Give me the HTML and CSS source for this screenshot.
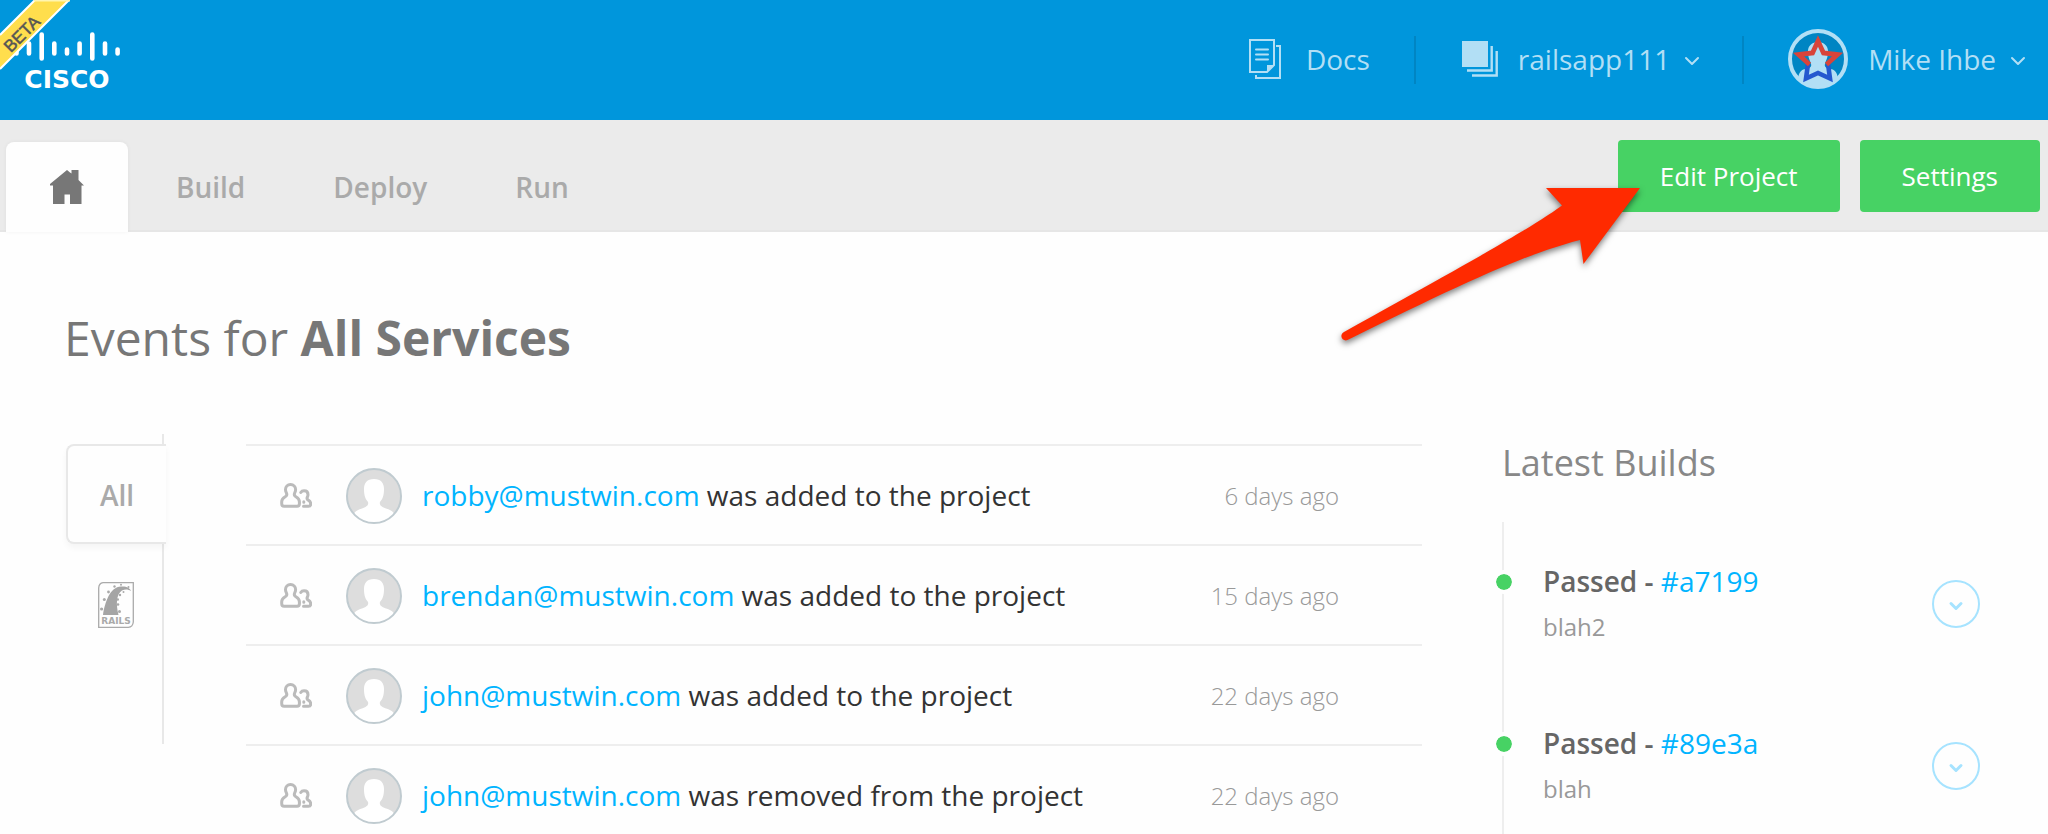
FILE: index.html
```html
<!DOCTYPE html>
<html lang="en">
<head>
<meta charset="utf-8">
<title>Events for All Services</title>
<link rel="stylesheet" href="styles.css">
</head>
<body>
<svg class="defs" aria-hidden="true">
  <symbol id="people" viewBox="0 0 32 25">
    <g fill="none" stroke="#bbb" stroke-width="3" stroke-linejoin="round" stroke-linecap="round">
      <path d="M10.500 1.500c-3 0-5 2.200-5 5 0 2.200.8 3 1.200 4.200.4 1.500-.2 2.300-1.500 3.100-2.400 1.300-3.500 2.400-3.500 5v2c0 1.600.9 2.500 2.400 2.500h13c1.500 0 2.300-.9 2.300-2.500v-2c0-2.600-1.100-3.700-3.500-5-1.300-.8-1.900-1.600-1.500-3.100.4-1.200 1.200-2 1.200-4.200 0-2.800-2-5-5.100-5z"/>
      <path d="M20.800 9.500c.8-1.300 1.900-1.700 3.200-1.700 2.400 0 4 1.600 4 3.900 0 1.200-.6 2.100-.9 3.100-.3 1.100.2 1.700 1.200 2.300 1.600.9 2.400 1.800 2.400 3.800 0 1.600-.7 2.400-2.200 2.400h-5M23.800 18.800v.4"/>
    </g>
  </symbol>
  <symbol id="person" viewBox="0 0 56 56">
    <clipPath id="disc"><circle cx="28" cy="28" r="27"/></clipPath>
    <circle cx="28" cy="28" r="27" fill="#ddd"/>
    <path clip-path="url(#disc)" fill="#fff" d="M28 11c-7 0-10 4-10 10 0 7 1.500 10 4 13 1 3-2 5-6 6.500-5 1.500-8 3.500-9 7.500v8h42v-8c-1-4-4-6-9-7.500-4-1.500-7-3.500-6-6.500 2.500-3 4-6 4-13 0-6-3-10-10-10z"/>
    <circle cx="28" cy="28" r="27" fill="none" stroke="#c0cbd0" stroke-width="2"/>
  </symbol>
</svg>

<header class="topbar">
  <a class="logo" href="#" aria-label="Cisco beta">
    <svg width="124" height="100" viewBox="0 0 124 100">
      <g stroke="#fff" stroke-width="4.600" stroke-linecap="round">
        <path d="M16.500 49.500v4M29 43.500v10M41.700 34.500v24M54.300 43.500v10M67 49.500v4M79.600 43.500v10M92.300 34.500v24M105 43.500v10M117.600 49.500v4"/>
      </g>
      <text class="logo-name" x="67" y="88" text-anchor="middle">CISCO</text>
      <path d="M35 0H69L0 69V35z" fill="#ffde4d"/>
      <path d="M35 0L0 35M69 0L0 69" stroke="#fff" stroke-width="2"/>
      <path d="M34 .7H70" stroke="#fff5b0" stroke-width="1.400"/>
      <text class="beta" text-anchor="middle" transform="translate(26 38) rotate(-45)">BETA</text>
    </svg>
  </a>
  <nav class="top-links">
    <a class="top-link docs" href="#">
      <svg width="32" height="40" viewBox="0 0 32 40" fill="none" stroke="#b2dff5" stroke-width="2">
        <path d="M1 1h24v25l-7 7H1zM27 7h4v32H7v-3"/>
        <path d="M7 10.500h12M7 15.500h12M7 20.500h12" stroke-linecap="round"/>
        <path d="M18 33v-7h7z" fill="#b2dff5" stroke="none"/>
      </svg>
      <span>Docs</span>
    </a>
    <button class="top-link project" type="button">
      <svg width="36" height="36" viewBox="0 0 36 36" fill="none" stroke="#b2dff5" stroke-width="2.400">
        <path d="M0 0h26v26H0z" fill="#b2dff5" stroke="none"/>
        <path d="M29.700 5v24.500H5M34.700 10v24.500H10"/>
      </svg>
      <span>railsapp111</span>
      <svg class="caret" width="16" height="10" viewBox="0 0 16 10"><path d="M2 2l6 6 6-6"/></svg>
    </button>
    <button class="top-link user" type="button">
      <svg width="60" height="60" viewBox="0 0 60 60">
        <circle cx="30" cy="30" r="28" fill="#0085c3"/>
        <path d="M30 13c-6 0-10 4-10 9 0 7 2 9 3 13 1 3-2 4.500-5 5-4 0-7 3-8 9a28 28 0 0 0 40 0c-1-6-4-9-8-9-3-.5-6-2-5-5 1-4 3-6 3-13 0-5-4-9-10-9z" fill="#b2dff5"/>
        <circle cx="30" cy="30" r="28" fill="none" stroke="#b2dff5" stroke-width="4"/>
        <path d="M20 35L18 49.500 30 44l12 5.500L40 35" fill="none" stroke="#2458cf" stroke-width="4.600"/>
        <path d="M21.500 35.500L10.500 25.500l14-1.500L30 12l5.500 12 14 1.500L38.500 35.500" fill="none" stroke="#d8443a" stroke-width="4.800"/>
      </svg>
      <span>Mike Ihbe</span>
      <svg class="caret" width="16" height="10" viewBox="0 0 16 10"><path d="M2 2l6 6 6-6"/></svg>
    </button>
  </nav>
</header>

<div class="subbar">
  <nav class="tabs">
    <a class="tab home" href="#" aria-label="Home">
      <svg width="34" height="34" viewBox="0 0 34 34"><path d="M17 0L20 2.500 21.500 3.500V0H28.500V10L34 15.500H31.500V34H20V24.500H14.500V34H3V15.500H0V14z" fill="#777"/></svg>
    </a>
    <a class="tab" href="#">Build</a>
    <a class="tab" href="#">Deploy</a>
    <a class="tab" href="#">Run</a>
  </nav>
  <div class="actions">
    <button class="action" type="button">Edit Project</button>
    <button class="action" type="button">Settings</button>
    <svg class="pointer" width="312" height="170" viewBox="0 0 312 170">
      <path d="M308 8H214L230 25.500C200 47 160 70 12 152a4.200 4.200 0 0 0 3.500 8C130 104 190 75 248 60L251.500 84z" fill="#ff2a00"/>
    </svg>
  </div>
</div>

<main class="page">
  <h1 class="title">Events for <strong>All Services</strong></h1>
  <div class="columns">
    <nav class="services">
      <a class="service selected" href="#">All</a>
      <a class="service" href="#" aria-label="Rails">
        <svg width="36" height="46" viewBox="0 0 36 46">
          <path d="M5 .7H35.300V40q-.5 5-5 5.300H.7V6Q1 1.200 5 .7z" fill="none" stroke="#aaa" stroke-width="1.300"/>
          <path d="M5 33C7 20 12 5 23 4.500c6-.3 9 1.500 10 4.500-3-2-6-2-9-.5-6 4-6 14-3.500 24.500z" fill="#a5a5a5"/>
          <g fill="#aaa"><circle cx="3.600" cy="27" r="1.600"/><circle cx="6.300" cy="17.500" r="1.500"/><circle cx="10.500" cy="10" r="1.400"/><circle cx="16.500" cy="4.500" r="1.200"/><circle cx="23" cy="2.700" r="1"/><circle cx="30.500" cy="5" r="1"/><circle cx="25.500" cy="10" r="1"/><circle cx="22" cy="13" r="1.200"/><circle cx="19.800" cy="17.500" r="1.200"/><circle cx="20" cy="22.500" r="1.300"/><circle cx="21.500" cy="29.500" r="1.500"/></g>
          <text class="rails-name" x="18" y="42" text-anchor="middle">RAILS</text>
        </svg>
      </a>
    </nav>

    <ul class="events">
      <li class="event">
        <svg class="kind" width="32" height="25"><use href="#people"/></svg>
        <svg class="avatar" width="56" height="56"><use href="#person"/></svg>
        <p class="what"><a href="#">robby@mustwin.com</a> was added to the project</p>
        <time class="when">6 days ago</time>
      </li>
      <li class="event">
        <svg class="kind" width="32" height="25"><use href="#people"/></svg>
        <svg class="avatar" width="56" height="56"><use href="#person"/></svg>
        <p class="what"><a href="#">brendan@mustwin.com</a> was added to the project</p>
        <time class="when">15 days ago</time>
      </li>
      <li class="event">
        <svg class="kind" width="32" height="25"><use href="#people"/></svg>
        <svg class="avatar" width="56" height="56"><use href="#person"/></svg>
        <p class="what"><a href="#">john@mustwin.com</a> was added to the project</p>
        <time class="when">22 days ago</time>
      </li>
      <li class="event">
        <svg class="kind" width="32" height="25"><use href="#people"/></svg>
        <svg class="avatar" width="56" height="56"><use href="#person"/></svg>
        <p class="what"><a href="#">john@mustwin.com</a> was removed from the project</p>
        <time class="when">22 days ago</time>
      </li>
    </ul>

    <section class="builds">
      <h2 class="builds-title">Latest Builds</h2>
      <ol class="timeline">
        <li class="build">
          <div class="build-text">
            <p class="build-name"><strong>Passed -</strong> <a href="#">#a7199</a></p>
            <p class="build-note">blah2</p>
          </div>
          <button class="expand" type="button" aria-label="Show build"><svg width="16" height="10" viewBox="0 0 16 10"><path d="M3 2.500l5 5 5-5"/></svg></button>
        </li>
        <li class="build">
          <div class="build-text">
            <p class="build-name"><strong>Passed -</strong> <a href="#">#89e3a</a></p>
            <p class="build-note">blah</p>
          </div>
          <button class="expand" type="button" aria-label="Show build"><svg width="16" height="10" viewBox="0 0 16 10"><path d="M3 2.500l5 5 5-5"/></svg></button>
        </li>
      </ol>
    </section>
  </div>
</main>
</body>
</html>
```
FILE: styles.css
```css
*, *::before { box-sizing: border-box; }
html { height: 100%; overflow: hidden; }
body {
  height: 100%;
  margin: 0;
  overflow: hidden;
  background: #fefefe;
  color: #333;
  font-family: "Open Sans", "Noto Sans", sans-serif;
  font-size: 28px;
  line-height: 40px;
}
a { color: #00b4ff; text-decoration: none; }
button { border: 0; background: none; font: inherit; cursor: pointer; }
h1, h2, p, ul, ol { margin: 0; padding: 0; font-weight: 400; }
ul, ol { list-style: none; }
svg { display: block; flex: none; }
.defs { position: absolute; width: 0; height: 0; }

.topbar {
  display: flex;
  justify-content: space-between;
  height: 120px;
  background: #0096dc;
}
.logo-name { font-family: "DejaVu Sans", sans-serif; font-size: 25px; font-weight: 700; fill: #fff; }
.beta { font-family: "Liberation Sans", sans-serif; font-size: 17px; fill: #555; stroke: #555; stroke-width: 0.5px; }
.top-links { display: flex; align-items: center; }
.top-link {
  display: flex;
  align-items: center;
  height: 48px;
  padding: 0 44px 2px;
  color: #b2dff5;
}
.top-link + .top-link { border-left: 2px solid #0085c3; }
.docs { gap: 25px; }
.project { gap: 20px; padding-left: 46px; padding-right: 42px; }
.user { gap: 20px; padding-right: 22px; }
.caret { margin: 4px 0 0 -6px; }
.caret path { fill: none; stroke: #b2dff5; stroke-width: 2; stroke-linecap: round; stroke-linejoin: round; }

.subbar {
  display: flex;
  justify-content: space-between;
  height: 112px;
  padding: 0 8px 0 6px;
  background: #ebebeb;
  border-bottom: 2px solid #e6e6e6;
}
.tabs { display: flex; align-items: flex-end; height: 112px; }
.tab {
  padding: 24px 40px 25px 48px;
  color: #aaa;
  font-weight: 600;
}
.home {
  display: flex;
  width: 122px;
  height: 90px;
  padding: 28px 44px;
  background: #fefefe;
  border-radius: 8px 8px 0 0;
  box-shadow: 0 0 4px rgba(0, 0, 0, 0.05);
}
.actions { position: relative; display: flex; gap: 20px; padding-top: 20px; }
.action {
  height: 72px;
  padding: 0 42px;
  border-radius: 4px;
  background: #47d264;
  color: #fff;
  font-size: 26px;
  font-weight: 500;
}
.pointer {
  position: absolute;
  top: 60px;
  right: 396px;
  pointer-events: none;
  filter: drop-shadow(0 3px 3px rgba(0, 0, 0, 0.5));
}

.page { padding: 73px 68px 0 64px; }
.title { color: #777; font-size: 48px; line-height: 66px; }
.columns {
  display: grid;
  grid-template-columns: 100px 1fr 478px;
  column-gap: 80px;
  align-items: start;
  padding: 63px 0 0 2px;
}
.services {
  height: 310px;
  padding-top: 10px;
  background: linear-gradient(#e8e8e8, #e8e8e8) 96px 0 / 2px 100% no-repeat;
}
.service {
  display: flex;
  align-items: center;
  justify-content: center;
  height: 122px;
  color: #aaa;
  font-weight: 600;
}
.selected {
  height: 100px;
  padding-top: 2px;
  background: #fefefe;
  border: 2px solid #e8e8e8;
  border-right: 0;
  border-radius: 8px 0 0 8px;
  box-shadow: 0 4px 6px rgba(0, 0, 0, 0.04);
}
.rails-name { font-family: "DejaVu Sans", sans-serif; font-size: 9px; font-weight: 700; fill: #aaa; }
.events { padding-top: 10px; }
.event {
  display: flex;
  align-items: center;
  height: 100px;
  padding: 0 83px 0 34px;
  border-top: 2px solid #eee;
}
.avatar { margin: 2px 20px 0 34px; }
.what { flex: 1; }
.when { padding-top: 2px; color: #999; font-size: 24px; font-weight: 300; }

.builds { padding-top: 4px; }
.builds-title { padding-bottom: 34px; color: #888; font-size: 36px; line-height: 50px; }
.timeline { border-left: 2px solid #eee; min-height: 320px; padding-top: 39px; }
.build {
  position: relative;
  display: flex;
  justify-content: space-between;
  height: 162px;
  padding-left: 39px;
}
.build::before {
  content: "";
  position: absolute;
  left: -12px;
  top: 9px;
  width: 24px;
  height: 24px;
  border: 4px solid #fefefe;
  border-radius: 50%;
  background: #47d264 padding-box;
}
.build-name strong { color: #666; font-weight: 600; }
.build-note { padding-top: 6px; color: #999; font-size: 24px; }
.expand {
  display: flex;
  align-items: center;
  justify-content: center;
  width: 48px;
  height: 48px;
  margin-top: 19px;
  padding: 4px 0 0;
  border: 2px solid #a6e3ff;
  border-radius: 50%;
}
.expand path { fill: none; stroke: #a6e3ff; stroke-width: 3; stroke-linecap: round; stroke-linejoin: round; }
```
